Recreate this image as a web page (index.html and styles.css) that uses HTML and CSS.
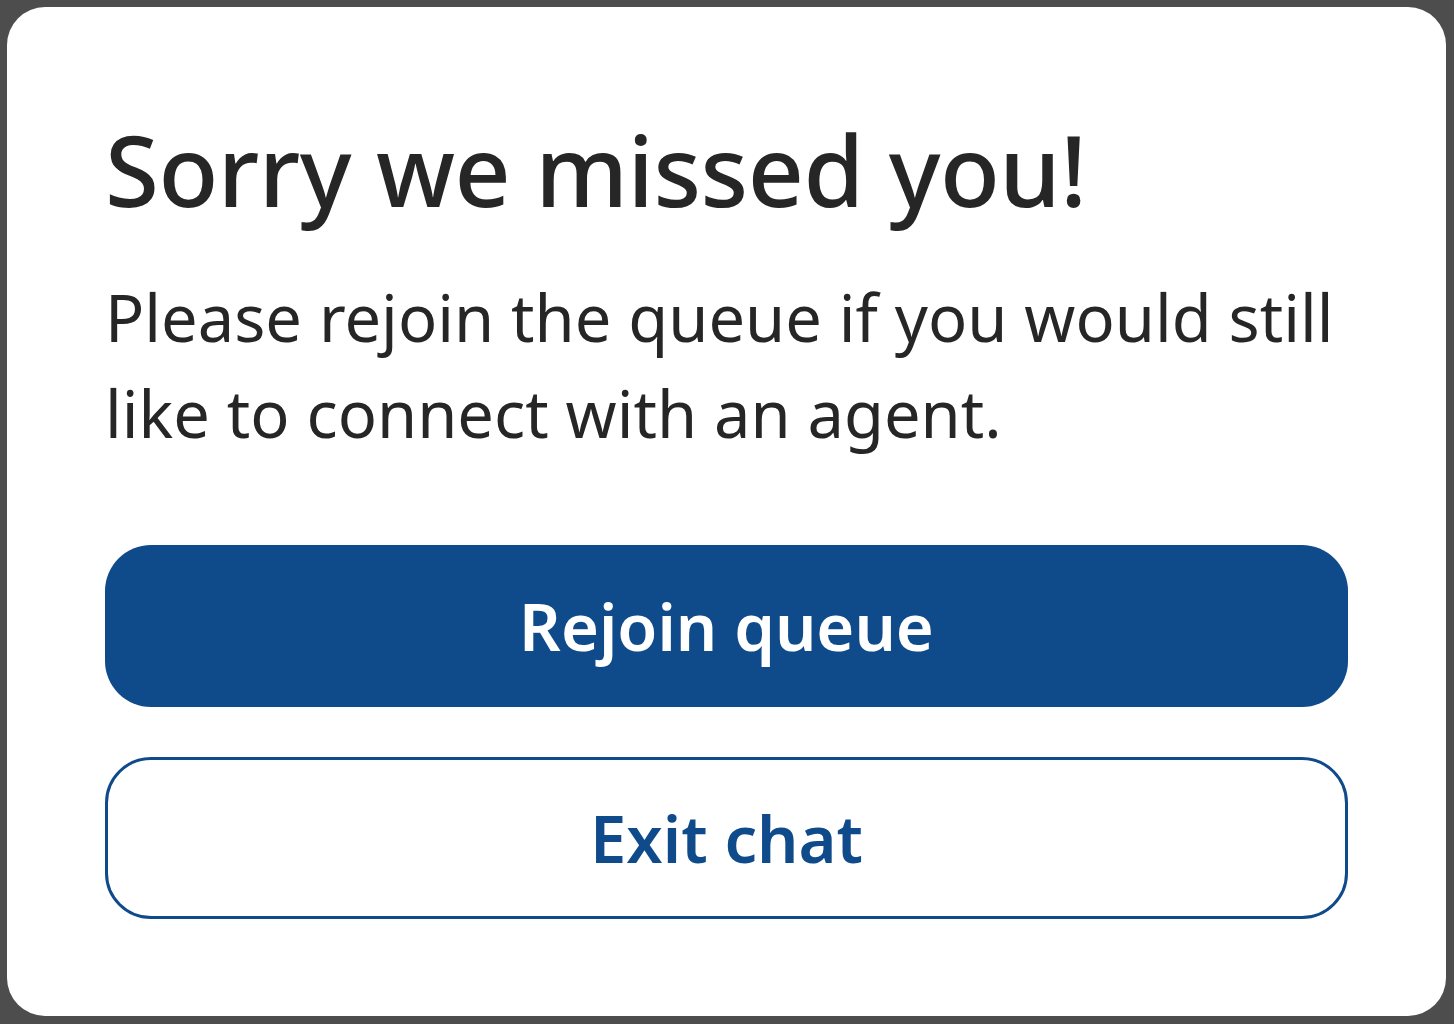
FILE: index.html
```html
<!DOCTYPE html>
<html lang="en">
<head>
<meta charset="utf-8">
<title>Sorry we missed you</title>
<link rel="stylesheet" href="styles.css">
</head>
<body>
<div class="card">
  <h1 class="title">Sorry we missed you!</h1>
  <p class="message">Please rejoin the queue if you would still like to connect with an agent.</p>
  <div class="actions">
    <button class="btn btn-primary" type="button">Rejoin queue</button>
    <button class="btn btn-secondary" type="button">Exit chat</button>
  </div>
</div>
</body>
</html>
```
FILE: styles.css
```css
html, body {
  margin: 0;
  padding: 0;
  height: 100%;
}
body {
  background: #4d4d4d;
  padding: 7px 8px 8px 7px;
  box-sizing: border-box;
  font-family: "Noto Sans", "Open Sans", sans-serif;
}
.card {
  background: #ffffff;
  border-radius: 38px;
  height: 100%;
  box-sizing: border-box;
  padding: 92px 98px 97px 98px;
  display: flex;
  flex-direction: column;
}
.title {
  margin: 0;
  font-size: 98px;
  font-weight: 500;
  line-height: 140px;
  color: #262626;
  letter-spacing: -0.5px;
}
.message {
  margin: 0;
  margin-top: 30px;
  font-size: 65px;
  line-height: 96px;
  color: #262626;
}
.actions {
  margin-top: auto;
  display: flex;
  flex-direction: column;
  gap: 50px;
}
.btn {
  height: 162px;
  border-radius: 46px;
  font-family: "Noto Sans", "Open Sans", sans-serif;
  font-size: 65px;
  font-weight: 600;
  cursor: pointer;
  box-sizing: border-box;
}
.btn-primary {
  background: #0f4a8a;
  color: #ffffff;
  border: none;
}
.btn-secondary {
  background: #ffffff;
  color: #0f4a8a;
  border: 3px solid #0f4a8a;
}
```
